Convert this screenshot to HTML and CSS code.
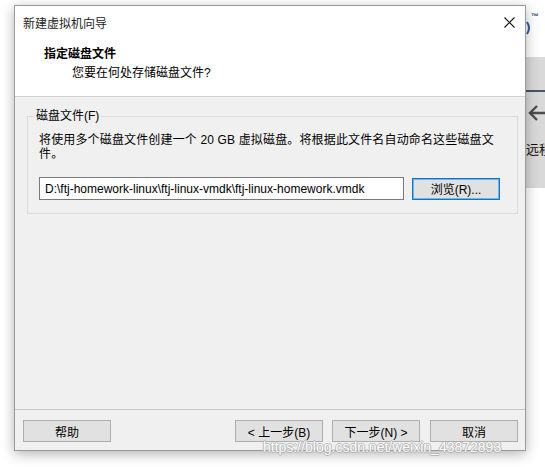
FILE: index.html
```html
<!DOCTYPE html>
<html>
<head>
	<meta charset="utf-8">
	<title>新建虚拟机向导</title>
	<link rel="stylesheet" href="styles.css">
</head>
<body>
	<!-- window behind the dialog -->
	<div class="behind">
		<span class="tm">™</span>
		<svg class="logo-arc" width="6" height="14" viewBox="0 0 6 14"><path d="M1 1 Q5 7 1 13" fill="none" stroke="#2a5fb0" stroke-width="2"/></svg>
		<div class="panel">
			<div class="panel-rule"></div>
			<svg class="arrow" width="20" height="18" viewBox="0 0 20 18"><path d="M19 9H3M10 2L3 9l7 7" fill="none" stroke="#4d4d4d" stroke-width="2.4"/></svg>
			<span class="remote">远程</span>
		</div>
	</div>

	<div class="dialog">
		<div class="head">
			<div class="titlebar">
				<span class="title">新建虚拟机向导</span>
				<svg class="close" width="11" height="11" viewBox="0 0 11 11"><path d="M0.5 0.5L10.5 10.5M10.5 0.5L0.5 10.5" stroke="#111" stroke-width="1.1"/></svg>
			</div>
			<h1 class="step">指定磁盘文件</h1>
			<p class="step-sub">您要在何处存储磁盘文件?</p>
		</div>

		<div class="body">
			<div class="content">
				<fieldset class="group">
					<legend>磁盘文件(F)</legend>
					<p class="desc">将使用多个磁盘文件创建一个 20 GB 虚拟磁盘。将根据此文件名自动命名这些磁盘文件。</p>
					<div class="file-row">
						<input class="path" type="text" value="D:\ftj-homework-linux\ftj-linux-vmdk\ftj-linux-homework.vmdk">
						<button class="btn btn-default">浏览(R)...</button>
					</div>
				</fieldset>
			</div>

			<div class="footer">
				<button class="btn">帮助</button>
				<span class="spacer"></span>
				<button class="btn">&lt; 上一步(B)</button>
				<button class="btn">下一步(N) &gt;</button>
				<button class="btn btn-cancel">取消</button>
			</div>
		</div>
	</div>

	<div class="watermark">https://blog.csdn.net/weixin_43872893</div>
</body>
</html>
```

FILE: styles.css
```css
html, body {
	margin: 0;
	padding: 0;
}

body {
	width: 545px;
	height: 467px;
	background: #fff;
	position: relative;
	overflow: hidden;
	font-family: "Liberation Sans", "Noto Sans CJK SC", sans-serif;
	font-size: 12px;
	color: #000;
}

/* window behind */
.behind {
	position: absolute;
	left: 500px;
	top: 0;
	width: 45px;
	height: 467px;
}

.tm {
	position: absolute;
	left: 31px;
	top: 12px;
	font-size: 8px;
	font-weight: bold;
	color: #1f3f7a;
}

.logo-arc {
	position: absolute;
	left: 26px;
	top: 21px;
}

.panel {
	position: absolute;
	left: 0;
	top: 57px;
	width: 45px;
	height: 131px;
	background: #d9d9d9;
}

.panel-rule {
	position: absolute;
	left: 26px;
	right: 0;
	top: 33px;
	height: 2px;
	background: #4a5665;
}

.arrow {
	position: absolute;
	left: 27px;
	top: 47px;
}

.remote {
	position: absolute;
	left: 26px;
	top: 82px;
	font-size: 13px;
	color: #111;
	white-space: nowrap;
}

/* dialog */
.dialog {
	position: relative;
	z-index: 1;
	margin: 5px 0 0 14px;
	width: 512px;
	height: 446px;
	box-sizing: border-box;
	border: 1px solid #9a9a9a;
	background: #f0f0f0;
	box-shadow: 0 3px 12px rgba(0, 0, 0, 0.3);
	display: flex;
	flex-direction: column;
}

.head {
	height: 90px;
	background: #fff;
	border-bottom: 1px solid #d0d0d0;
}

.titlebar {
	height: 32px;
	display: flex;
	align-items: center;
	justify-content: space-between;
	padding: 0 10px 0 8px;
}

.title {
	color: #222;
}

.step {
	margin: 8px 0 0 29px;
	font-size: 12px;
	line-height: 16px;
	font-weight: bold;
}

.step-sub {
	margin: 3px 0 0 57px;
	line-height: 16px;
}

.body {
	flex: 1;
	display: flex;
	flex-direction: column;
}

.content {
	flex: 1;
}

.group {
	margin: 11px 10px 0 12px;
	padding: 0 10px 13px 11px;
	border: 1px solid #dcdcdc;
}

.group legend {
	margin-left: -5px;
	padding: 0 2px;
	line-height: 17px;
}

.desc {
	margin: 8px 0 0;
	line-height: 14px;
	width: 468px;
	letter-spacing: 0.15px;
}

.file-row {
	display: flex;
	align-items: center;
	margin-top: 16px;
}

.path {
	width: 365px;
	height: 23px;
	box-sizing: border-box;
	border: 1px solid #7a7a7a;
	padding: 0 5px;
	font-family: inherit;
	font-size: 12px;
	background: #fff;
	outline: none;
}

.btn {
	width: 88px;
	height: 22px;
	box-sizing: border-box;
	border: 1px solid #adadad;
	background: #e1e1e1;
	font-family: inherit;
	font-size: 12px;
	color: #000;
	padding: 0;
}

.btn-default {
	margin-left: 8px;
	border-color: #0078d7;
	box-shadow: inset 0 0 0 1px rgba(0, 120, 215, 0.45);
}

.footer {
	display: flex;
	gap: 9px;
	padding: 10px 7px 8px 8px;
	border-top: 1px solid #c6c6c6;
}

.spacer {
	flex: 1;
}

.btn-cancel {
	margin-left: 1px;
}

.watermark {
	position: absolute;
	z-index: 2;
	left: 263px;
	top: 439px;
	font-family: "Liberation Sans", sans-serif;
	font-size: 14px;
	color: #fff;
	opacity: 0.85;
	text-shadow: 1px 0 0 #b0b0b0, -1px 0 0 #b0b0b0, 0 1px 0 #b0b0b0, 0 -1px 0 #b0b0b0;
}
```
